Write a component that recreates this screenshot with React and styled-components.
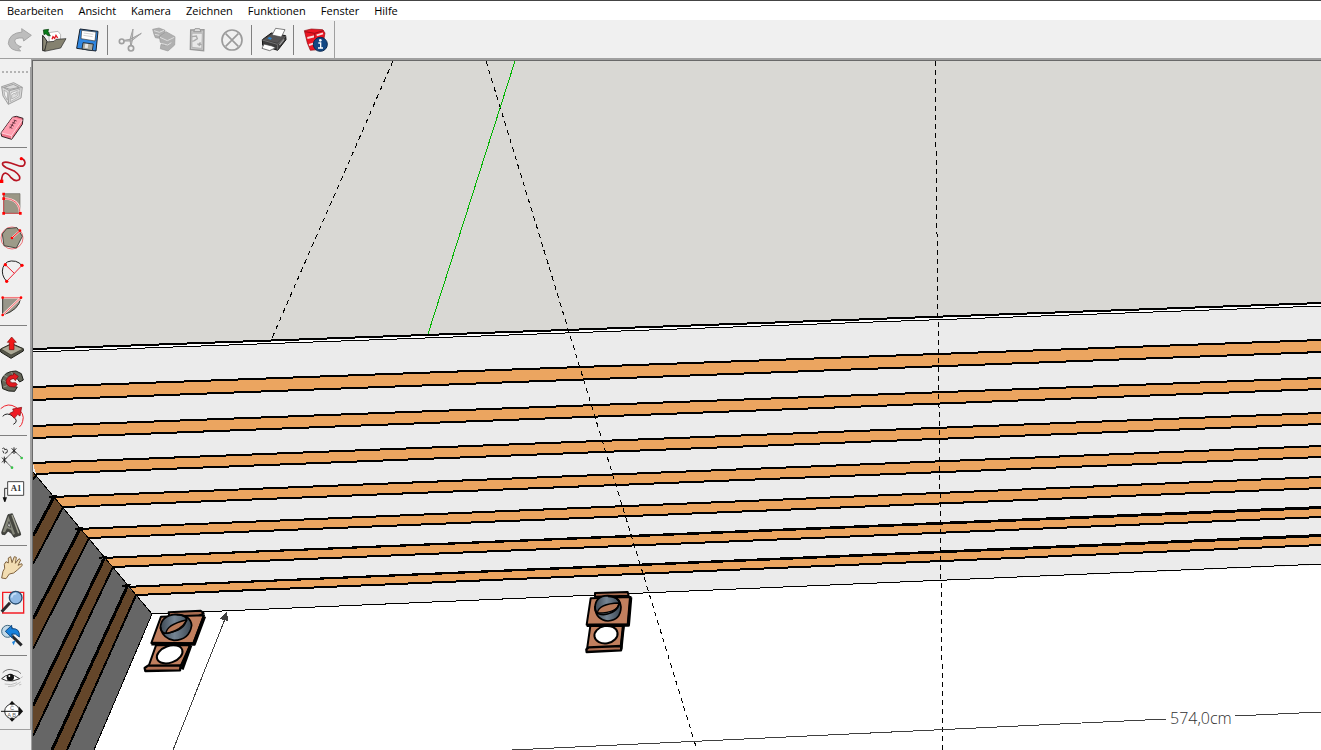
import React, { useState } from 'react'
import styled, { createGlobalStyle } from 'styled-components'

const GlobalStyle = createGlobalStyle`
    * {
        box-sizing: border-box;
    }
    body {
        margin: 0;
        background: #f0f0f0;
        font-family: 'Open Sans', 'Noto Sans', sans-serif;
    }
`

const Window = styled.div`
    display: flex;
    flex-direction: column;
    height: 100vh;
    overflow: hidden;
    border-top: 1px solid #444;
`

const MenuBar = styled.nav`
    display: flex;
    flex: none;
    height: 19px;
    padding-left: 7px;
    gap: 15px;
    background: #fff;
`

const MenuButton = styled.button`
    padding: 0;
    border: none;
    background: none;
    color: #000;
    font-family: inherit;
    font-size: 11px;
    line-height: 19px;
`

const ToolbarRow = styled.div`
    display: flex;
    flex: none;
    height: 39px;
    border-bottom: 1px solid #a0a0a0;
`

const Toolbar = styled.div`
    display: flex;
    align-items: center;
    margin-top: 1px;
    padding: 0 1px 0 3px;
    border-right: 1px solid #a0a0a0;
`

const ToolButton = styled.button`
    display: flex;
    flex: none;
    align-items: center;
    justify-content: ${props => props.$side ? 'flex-start' : 'center'};
    width: ${props => props.$side ? '28px' : '34px'};
    height: 34px;
    padding: 0;
    border: none;
    background: none;
`

const Separator = styled.div`
    flex: none;
    width: 1px;
    height: 30px;
    margin: 0 5px 0 2px;
    background: #808080;
`

const SideSeparator = styled.div`
    flex: none;
    width: 27px;
    height: 1px;
    margin: 2px 0 5px;
    background: #808080;
`

const Workspace = styled.div`
    display: flex;
    flex: 1;
    min-height: 0;
`

const SideRail = styled.div`
    flex: none;
    width: 31px;
    padding-top: 8px;
`

const SideToolbar = styled.div`
    display: flex;
    flex-direction: column;
    border-right: 1px solid #a0a0a0;
    border-bottom: 1px solid #a0a0a0;
`

const Grip = styled.div`
    height: 2px;
    margin: 4px 2px;
    background: repeating-linear-gradient(90deg, #b4b4b4 0 2px, transparent 2px 4px);
`

const Viewport = styled.main`
    display: flex;
    flex: 1;
    min-width: 0;
    border-top: 1px solid #a0a0a0;
    border-left: 1px solid #a0a0a0;
`

const Scene = styled.svg`
    display: block;
    flex: 1;
    min-width: 0;
    height: 100%;
    border-top: 1px solid #696969;
    border-left: 1px solid #696969;
    background: #fff;
`

const DimensionText = styled.text`
    fill: #303030;
    font-family: 'Open Sans', sans-serif;
    font-size: 16px;
    font-weight: 300;
`

const menus = ['Bearbeiten', 'Ansicht', 'Kamera', 'Zeichnen', 'Funktionen', 'Fenster', 'Hilfe']

const drawings = {
    redo: (
        <path d="M7 53Q8 22 48 18L47 8L76 28L53 45L51 36Q27 34 26 45Q31 60 46 62L37 68L44 75Q14 74 9 57Z" fill="#bdbdbd" stroke="#a5a5a5" strokeWidth="3" />
    ),
    open: (
        <>
            <path d="M26 20L54 16L62 26L61 46L28 50Z" fill="#fff" stroke="#999" strokeWidth="2" />
            <path d="M36 40l3-8 5 5 4-9 5 8" fill="none" stroke="#e01b24" strokeWidth="4" />
            <path d="M8 28L16 38L22 48L14 74L8 74Z" fill="#8b8875" stroke="#222" strokeWidth="3" />
            <path d="M20 48L42 46L48 40L78 38L62 66L14 76Z" fill="#858270" stroke="#222" strokeWidth="2" />
            <path d="M10 12L26 10L24 16L31 30L22 28L18 23L12 26Z" fill="#087a18" stroke="#043d0b" strokeWidth="2" />
        </>
    ),
    save: (
        <>
            <path d="M18 9L72 16L66 75L8 67Z" fill="#2f86e0" stroke="#17202c" strokeWidth="3" />
            <path d="M23 13L66 18L63 45L21 38Z" fill="#fff" stroke="#333" strokeWidth="2" />
            <path d="M29 21l29 4M28 28l28 4" stroke="#bbb" strokeWidth="2" />
            <path d="M27 50L58 54L55 74L24 69Z" fill="#aaa99e" stroke="#26323e" strokeWidth="3" />
            <path d="M34 53l9 1-2 13-9-2Z" fill="#e7e7e7" />
        </>
    ),
    cut: (
        <g fill="none" stroke="#a0a0a0" strokeWidth="5">
            <circle cx="17" cy="46" r="7" />
            <circle cx="45" cy="67" r="8" />
            <path d="M24 43L42 40L76 22L46 45L24 45M44 58L42 40L51 9L49 42L46 58" strokeWidth="3" fill="#c7c7c7" />
        </g>
    ),
    copy: (
        <g fill="#b0b0b0" stroke="#999" strokeWidth="2">
            <path d="M8 10L27 6L45 13L42 24L28 30L29 37L16 35L12 25Z" />
            <path d="M12 14l16 5 14-6M15 25l13 3" fill="none" stroke="#dedede" strokeWidth="3" />
            <path d="M28 31L48 17L75 32L74 57L54 75L31 68L33 55L45 58L31 49Z" />
            <path d="M30 34L52 44L73 34M34 52L53 57L64 50" fill="none" stroke="#ddd" strokeWidth="3" />
        </g>
    ),
    paste: (
        <>
            <path d="M20 12L60 11L59 74L19 70Z" fill="#c4c4c4" stroke="#999" strokeWidth="4" />
            <path d="M24 22L55 22L53 67L24 64Z" fill="#e8e8e8" stroke="#aaa" strokeWidth="2" />
            <path d="M29 17L33 8H47L51 17Z" fill="#ddd" stroke="#999" strokeWidth="3" />
            <path d="M23 32l14-2 3 8-9 6-6 2M40 54l13 2M45 60l4-11" fill="none" stroke="#aaa" strokeWidth="4" />
        </>
    ),
    cancel: (
        <g fill="none" stroke="#9b9b9b" strokeWidth="5">
            <circle cx="42" cy="42" r="30" />
            <path d="M23 23L61 61M61 23L23 61" />
        </g>
    ),
    print: (
        <>
            <path d="M7 41L34 21L77 29L78 41L53 73L8 58Z" fill="#3e3d3d" stroke="#151515" strokeWidth="3" />
            <path d="M10 41L35 25L73 31L52 50Z" fill="#565455" />
            <path d="M7 42L52 55L77 30M53 56V71" fill="none" stroke="#8d8d8d" strokeWidth="2" />
            <path d="M36 27L47 7L75 11L64 33Z" fill="#fff" stroke="#444" strokeWidth="2" />
            <path d="M12 54L36 60L47 65L29 74L6 67Z" fill="#fff" stroke="#333" strokeWidth="2" />
            <path d="M27 33l9 3-4 5-9-3Z" fill="#2c85d0" />
            <path d="M58 57L72 40" stroke="#999" strokeWidth="4" />
        </>
    ),
    info: (
        <>
            <path d="M7 14L28 9L62 11L69 21L60 70L25 73L16 51Z" fill="#ec1522" stroke="#8c0910" strokeWidth="2" />
            <path d="M9 17L38 22L65 14" fill="none" stroke="#a20b14" strokeWidth="3" />
            <path d="M16 36L38 31M21 57L36 52M44 28L63 22" fill="none" stroke="#f9dcdc" strokeWidth="6" />
            <path d="M38 22V36" stroke="#a20b14" strokeWidth="3" />
            <circle cx="55" cy="55" r="21" fill="#124784" stroke="#0a2950" strokeWidth="3" />
            <circle cx="55" cy="43" r="4" fill="#fff" />
            <path d="M49 51H56V66M48 66H63" fill="none" stroke="#fff" strokeWidth="4" />
        </>
    ),
    component: (
        <g fill="none" stroke="#a0a0a0" strokeWidth="3">
            <path d="M5 20L41 8L67 22L63 54L25 73L9 48Z" fill="#dadada" />
            <path d="M5 20L28 32L67 22M28 32L25 73M12 22L40 13L58 22L30 28Z" />
            <path d="M12 30l11 8-1 22-8-14ZM33 38l27-10-3 22-26 15Z" fill="#f0f0f0" strokeWidth="2" />
            <path d="M35 57V46L42 40L48 43V37L55 35L53 47L45 52Z" fill="#ddd" strokeWidth="2" />
        </g>
    ),
    eraser: (
        <>
            <path d="M3 57L37 10L49 7L69 13L67 31L35 76L5 67Z" fill="#f2788c" stroke="#352126" strokeWidth="3" />
            <path d="M4 57L35 65L67 17L38 10Z" fill="#ff9fb0" />
            <path d="M4 57L35 65L67 18M35 65V74" fill="none" stroke="#fff0f3" strokeWidth="2" />
            <path d="M28 39l9 4M32 32l9 4M37 25l9 3M41 18l9 3M30 43l16-25" fill="none" stroke="#6d3844" strokeWidth="3" />
        </>
    ),
    freehand: (
        <>
            <path d="M5 75Q5 53 16 51Q24 52 33 65Q46 79 58 71Q64 60 44 46L19 35Q3 27 9 20Q16 16 32 21L58 30Q74 33 75 20Q73 9 63 8" fill="none" stroke="#b81422" strokeWidth="5" />
            <circle cx="64" cy="8" r="5" fill="red" />
            <rect x="0" y="71" width="10" height="10" fill="red" />
        </>
    ),
    arcBox: (
        <>
            <path d="M11 11H60V70H11Z" fill="#9b9786" stroke="#6d6a60" strokeWidth="2" />
            <path d="M11 25Q60 26 60 70" fill="none" stroke="#ffdada" strokeWidth="7" />
            <path d="M11 12V70H60Q60 26 11 25" fill="none" stroke="#e82a32" strokeWidth="2" />
            <path d="M7 8h8v8H7ZM7 22h8v8H7ZM7 66h8v8H7ZM57 66h8v8H57Z" fill="red" />
        </>
    ),
    polygon: (
        <>
            <circle cx="36" cy="42" r="33" fill="none" stroke="#ed3038" strokeWidth="2" />
            <path d="M20 14L51 11L67 37L49 72L12 65L7 30Z" fill="#9d9b89" stroke="#494840" strokeWidth="3" />
            <path d="M36 42L60 20" stroke="#ffdcdc" strokeWidth="6" />
            <path d="M36 42L60 20" stroke="red" strokeWidth="3" />
            <circle cx="36" cy="42" r="4" fill="red" />
            <circle cx="60" cy="20" r="4" fill="red" />
        </>
    ),
    arc: (
        <>
            <path d="M20 70Q2 51 9 28Q18 4 47 10Q58 13 66 23" fill="none" stroke="#222" strokeWidth="3" />
            <path d="M16 20L43 46M66 22L20 70" stroke="#ed2030" strokeWidth="3" />
            <g fill="red"><circle cx="16" cy="20" r="5" /><circle cx="66" cy="22" r="5" /><circle cx="20" cy="70" r="5" /></g>
        </>
    ),
    pie: (
        <>
            <path d="M8 18H62Q57 55 8 69Z" fill="#99968a" stroke="#34342f" strokeWidth="3" />
            <path d="M8 17H63L8 69" fill="none" stroke="#ffe2df" strokeWidth="7" />
            <path d="M8 17H63L8 69" fill="none" stroke="#ed2630" strokeWidth="2" />
            <g fill="red"><circle cx="8" cy="17" r="4" /><circle cx="63" cy="17" r="4" /><circle cx="8" cy="69" r="4" /></g>
        </>
    ),
    pushPull: (
        <>
            <path d="M2 45L35 29L70 44V51L33 73L2 54Z" fill="#56574b" stroke="#1c1d17" strokeWidth="3" />
            <path d="M3 45L35 30L69 45L33 63Z" fill="#aaa895" stroke="#353529" strokeWidth="2" />
            <path d="M28 47V25H22L35 9L49 25H42V47Z" fill="#f11919" stroke="#810c0c" strokeWidth="2" />
        </>
    ),
    followMe: (
        <>
            <path d="M26 69L8 62L4 38Q12 9 48 9L64 17L70 36L59 42L51 31Q30 26 26 43Q28 57 52 57L44 70Z" fill="#65675a" stroke="#1d1e19" strokeWidth="3" />
            <path d="M9 36L20 42M13 22L26 30M34 11L39 22M10 57L22 53" stroke="#96978a" strokeWidth="3" />
            <path d="M18 38Q25 20 40 21L41 15L55 25L46 38L42 32Q28 33 30 41Q37 46 47 44L52 50L43 57L30 56Q17 50 18 38Z" fill="#e11a20" stroke="#720c0d" strokeWidth="2" />
        </>
    ),
    offset: (
        <>
            <path d="M2 20Q24 0 48 16Q76 34 68 58Q66 69 58 75" fill="none" stroke="#ee242d" strokeWidth="3" />
            <path d="M8 43Q20 29 39 43Q58 58 40 67" fill="none" stroke="#222" strokeWidth="3" />
            <path d="M29 34L41 28L38 21L65 16L60 42L53 37L43 49Z" fill="#ef1b24" stroke="#78070b" strokeWidth="2" />
        </>
    ),
    dimension: (
        <>
            <path d="M13 48L42 20M13 48L36 71M42 20L65 41" fill="none" stroke="#333" strokeWidth="2" />
            <path d="M6 41L20 55M6 55L20 41M13 38V58M35 13L49 27M35 27L49 13M42 10V30" stroke="#222" strokeWidth="3" />
            <path d="M7 14Q14 9 14 17Q21 13 22 19Q24 27 15 28M8 20l4 8" fill="none" stroke="#333" strokeWidth="3" />
            <circle cx="36" cy="71" r="4" fill="#36c248" />
            <circle cx="65" cy="42" r="4" fill="#36c248" />
        </>
    ),
    text: (
        <>
            <path d="M23 31H14V61" fill="none" stroke="#333" strokeWidth="3" />
            <path d="M8 58H21L16 72H13Z" fill="#111" />
            <path d="M23 11H71V52H23Z" fill="#fff" stroke="#444" strokeWidth="3" />
            <text x="32" y="40" fontFamily="Liberation Serif" fontSize="26" fontWeight="700" fill="#333">A1</text>
        </>
    ),
    text3d: (
        <>
            <path d="M5 61L24 8L37 5L61 62L62 69L42 76L34 64L24 57L15 68L6 67Z" fill="#464740" stroke="#1e1f1c" strokeWidth="2" />
            <path d="M8 60L25 12L45 66L39 68L33 53L21 49L15 61Z" fill="#85877a" />
            <path d="M23 42L27 29L32 46Z" fill="#f0f0f0" stroke="#222" strokeWidth="2" />
            <path d="M36 9L56 64" stroke="#a7a899" strokeWidth="4" />
        </>
    ),
    hand: (
        <path d="M5 72L9 52L14 43L13 31L18 23L25 27L25 12L32 8L36 26L43 8L49 10L46 28L57 14L62 18L54 34L65 29L67 34L52 48L41 57L28 60L18 74Z" fill="#f2ddb2" stroke="#80633f" strokeWidth="3" />
    ),
    zoomWindow: (
        <>
            <path d="M8 13H71V75H8Z" fill="none" stroke="#f31c24" strokeWidth="4" />
            <path d="M30 44L5 71" stroke="#29292e" strokeWidth="9" />
            <circle cx="47" cy="29" r="19" fill="#91b9e4" stroke="#294d6e" strokeWidth="4" />
            <path d="M35 29Q36 17 49 17" stroke="#c7e0fa" strokeWidth="5" fill="none" />
        </>
    ),
    zoomPrevious: (
        <>
            <circle cx="23" cy="28" r="18" fill="#c2d9e8" stroke="#406880" strokeWidth="3" />
            <path d="M36 42L65 70" stroke="#25272a" strokeWidth="9" />
            <path d="M16 28L35 10V20Q61 18 58 45L46 36L35 36L37 48Z" fill="#1882dd" stroke="#124a84" strokeWidth="3" />
            <path d="M36 60L47 55L41 70Z" fill="#1882dd" />
        </>
    ),
    look: (
        <>
            <path d="M8 26Q22 11 42 19Q55 19 63 29" fill="none" stroke="#777" strokeWidth="3" />
            <path d="M5 44Q28 21 59 44Q39 54 19 50Z" fill="#fff" stroke="#333" strokeWidth="3" />
            <circle cx="31" cy="40" r="11" fill="#111" />
            <circle cx="28" cy="36" r="3" fill="#fff" />
            <path d="M14 60Q33 66 51 56M24 68Q44 70 62 54M61 43l7-5M57 63l7-2" fill="none" stroke="#c0c0c0" strokeWidth="3" />
        </>
    ),
    section: (
        <>
            <circle cx="36" cy="40" r="22" fill="#fff" stroke="#333" strokeWidth="3" />
            <path d="M3 40H67M36 11V22M36 58V69" stroke="#111" strokeWidth="3" />
            <path d="M28 18L36 9L45 18ZM28 62L36 71L45 62ZM56 25L69 40L56 55Z" fill="#111" />
            <g fontFamily="Liberation Sans" fontSize="17" fill="#666">
                <text x="30" y="36">C</text>
                <text x="22" y="56">A B</text>
            </g>
        </>
    ),
}

const topTools = [
    ['redo', 'Wiederholen'], ['open', 'Öffnen'], ['save', 'Speichern'], null,
    ['cut', 'Ausschneiden'], ['copy', 'Kopieren'], ['paste', 'Einfügen'], ['cancel', 'Löschen'], null,
    ['print', 'Drucken'], null,
    ['info', 'Modellinformationen'],
]

const sideTools = [
    ['component', 'Komponente'], ['eraser', 'Radiergummi'], null,
    ['freehand', 'Freihand'], ['arcBox', 'Bogen'], ['polygon', 'Polygon'], ['arc', '2-Punkt-Bogen'], ['pie', 'Kreissektor'], null,
    ['pushPull', 'Drücken/Ziehen'], ['followMe', 'Folge mir'], ['offset', 'Versatz'], null,
    ['dimension', 'Abmessung'], ['text', 'Text'], ['text3d', '3D-Text'], null,
    ['hand', 'Schwenken'], ['zoomWindow', 'Zoomfenster'], ['zoomPrevious', 'Vorherige'], null,
    ['look', 'Umsehen'], ['section', 'Schnittebene'],
]

// left x, top y, bottom x, bottom y, then both heights at the right edge
const slats = [
    [33, 387, 33, 400, 340, 352],
    [33, 426, 33, 438, 378, 389],
    [33, 463, 36, 474, 413, 424],
    [52, 497, 63, 507, 446, 457],
    [77, 529, 89, 538, 477, 488],
    [101, 558, 113, 567, 507, 517],
    [125, 587, 136, 595, 535, 545],
]

const darkSlats = [
    [[33, 473], [36, 475], [33, 480], [33, 473]],
    [[54, 497], [63, 507], [33, 564], [33, 536]],
    [[80, 529], [89, 538], [33, 649], [33, 619]],
    [[104, 559], [113, 567], [33, 736], [33, 706]],
    [[127, 587], [136, 595], [67, 750], [52, 750]],
]

const Icon = ({ name }) => (
    <svg width="28" height="28" viewBox="0 0 84 84" aria-hidden="true">{drawings[name]}</svg>
)

const Tools = ({ items, side, active, onPick }) => items.map((item, i) => {
    if (!item) return side ? <SideSeparator key={i} /> : <Separator key={i} />
    return (
        <ToolButton
            key={i}
            $side={side}
            title={item[1]}
            aria-label={item[1]}
            aria-pressed={active === item[0]}
            onClick={() => onPick(item[0])}>
            <Icon name={item[0]} />
        </ToolButton>
    )
})

const Brackets = () => (
    <g stroke="#000" strokeWidth="6" strokeLinejoin="round" shapeRendering="auto">
        <svg x="30" y="460" width="220" height="290" viewBox="0 0 660 870">
            <path d="M416 457L512 452L521 460L502 470L418 470Z" fill="#a96c50" />
            <path d="M378 556L480 556L452 618L356 618Z" fill="#c17f5e" />
            <path d="M482 556L456 628" strokeWidth="10" />
            <ellipse cx="419" cy="583" rx="40" ry="25" fill="#fff" transform="rotate(-20 419 583)" />
            <path d="M344 624L354 617L452 616L450 631L346 633Z" fill="#b06f52" strokeWidth="7" />
            <path d="M393 470L522 466L490 550L364 549Z" fill="#c17f5e" />
            <path d="M523 469L492 552L364 551" fill="none" strokeWidth="11" />
            <path d="M391 505Q392 467 436 463Q482 464 485 496Q478 540 432 541Q401 538 391 505Z" fill="url(#steel)" strokeWidth="5" />
            <path d="M408 520Q410 494 468 480Q466 512 408 520Z" fill="#b87958" strokeWidth="4" />
            <path d="M392 500Q392 524 416 519Q452 511 470 482Q472 466 440 464" fill="none" strokeWidth="5" />
        </svg>
        <svg x="560" y="570" width="110" height="100" viewBox="0 0 330 300">
            <path d="M105 69L203 66L206 77L105 80Z" fill="#a96c50" />
            <path d="M91 168L191 168L182 232L81 238Z" fill="#c17f5e" />
            <path d="M190 168L183 238" strokeWidth="9" />
            <ellipse cx="138" cy="194" rx="35" ry="26" fill="#fff" transform="rotate(-10 138 194)" />
            <path d="M79 238L86 232L184 228L183 241L80 246Z" fill="#b06f52" strokeWidth="7" />
            <path d="M92 85L212 81L204 164L80 164Z" fill="#c17f5e" />
            <path d="M212 82L205 165L80 166" fill="none" strokeWidth="10" />
            <path d="M105 113Q106 78 143 77Q179 78 183 111Q182 150 144 153Q108 150 105 113Z" fill="url(#steel)" strokeWidth="5" />
            <path d="M112 129Q116 101 177 99Q172 130 112 129Z" fill="#b87958" strokeWidth="4" />
            <path d="M105 108Q102 134 130 134Q172 130 179 98Q174 80 144 79" fill="none" strokeWidth="5" />
        </svg>
    </g>
)

const Model = () => (
    <Scene viewBox="33 61 1288 689" preserveAspectRatio="xMinYMin slice" shapeRendering="crispEdges" role="img" aria-label="Modellansicht">
        <defs>
            <linearGradient id="steel">
                <stop offset="0" stopColor="#3c4752" />
                <stop offset=".45" stopColor="#748493" />
                <stop offset="1" stopColor="#3b4752" />
            </linearGradient>
        </defs>
        <path d="M33 61H1321V304L33 350Z" fill="#d9d8d4" />
        <path d="M33 352L1321 306V565L152 614L33 472Z" fill="#ebebeb" />
        <path d="M33 351L1321 305" stroke="#fff" strokeWidth="2" />
        <path d="M33 349L1321 303" stroke="#000" strokeWidth="2" />
        <path d="M33 352L1321 306" stroke="#000" />
        {slats.map(([x1, y1, x2, y2, r1, r2]) => (
            <g key={y1}>
                <path d={`M${x1} ${y1}L1321 ${r1}V${r2}L${x2} ${y2}Z`} fill="#eba560" />
                <path d={`M${x1} ${y1}L1321 ${r1}M${x2} ${y2}L1321 ${r2}`} stroke="#000" strokeWidth="2" />
                {y1 > 540 && <path d={`M${x1} ${y1}L1321 ${r1 + 1}`} stroke="#000" strokeWidth="2" />}
            </g>
        ))}
        <path d="M152 614L1321 564" stroke="#000" />
        <path d="M33 472L152 614L94 750H33Z" fill="#666" />
        {darkSlats.map(([a, b, c, d]) => (
            <g key={a[0]}>
                <path d={`M${a}L${b}L${c}L${d}Z`} fill="#64462a" />
                <path d={`M${a}L${d}`} stroke="#000" strokeWidth="3" />
                <path d={`M${b}L${c}`} stroke="#000" strokeWidth="2" />
            </g>
        ))}
        <path d="M49 497L55 496L51 501M75 529L81 528L77 532M99 558L105 557L102 561M122 586L129 585L125 589" fill="none" stroke="#000" strokeWidth="2" />
        <path d="M33 472L152 614L94 750" fill="none" stroke="#000" />
        <path d="M393 61L272 338M486 61L697 750M935 61L943 750" stroke="#000" strokeDasharray="5 4" />
        <path d="M515 61L428 334" stroke="#00b400" />
        <path d="M227 614L173 750M512 750L1166 719M1235 716L1321 712" stroke="#404040" />
        <path d="M227 611L228 621L220 619Z" fill="#404040" />
        <DimensionText x="1170" y="724">574,0cm</DimensionText>
        <Brackets />
    </Scene>
)

export default function App() {
    const [active, setActive] = useState('')

    return (
        <Window>
            <GlobalStyle />
            <MenuBar>
                {menus.map(menu => <MenuButton key={menu}>{menu}</MenuButton>)}
            </MenuBar>
            <ToolbarRow>
                <Toolbar>
                    <Tools items={topTools} active={active} onPick={setActive} />
                </Toolbar>
            </ToolbarRow>
            <Workspace>
                <SideRail>
                    <SideToolbar>
                        <Grip />
                        <Tools items={sideTools} side active={active} onPick={setActive} />
                    </SideToolbar>
                </SideRail>
                <Viewport>
                    <Model />
                </Viewport>
            </Workspace>
        </Window>
    )
}
